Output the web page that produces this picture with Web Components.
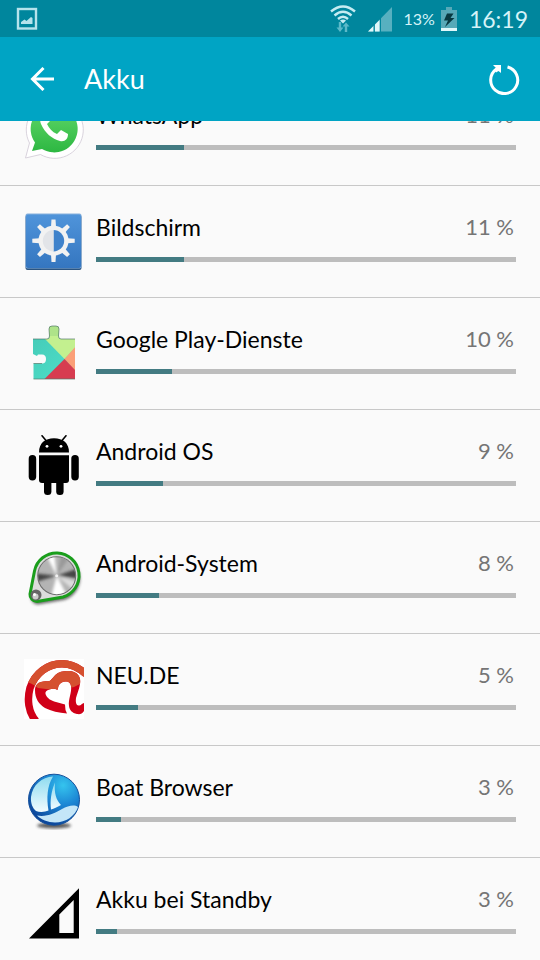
<!DOCTYPE html>
<html lang="de">
<head>
<meta charset="utf-8">
<meta name="viewport" content="width=device-width, initial-scale=1">
<title>Akku</title>
<style>
    body {
        margin: 0;
        background: #fafafa;
        font-family: Lato, "Open Sans", sans-serif;
    }
</style>
</head>
<body>
<battery-screen>
    <status-bar slot="status" time="16:19" charge="13%"></status-bar>
    <app-bar slot="header" heading="Akku"></app-bar>

    <usage-item name="WhatsApp" percent="11" level="21">
        <svg viewBox="0 0 60 60" aria-hidden="true">
            <defs>
                <linearGradient id="wa" x1="0" y1="0" x2="0" y2="1">
                    <stop offset="0" stop-color="#62d86a"/>
                    <stop offset="1" stop-color="#2db742"/>
                </linearGradient>
            </defs>
            <path d="M1.500 59 L5.500 44 A28.500 28.500 0 1 1 16.500 55.500Z" fill="#fff" stroke="#cfc8d4" stroke-width=".8"/>
            <path d="M8 52 L11 43.500 A23.500 23.500 0 1 1 18 50Z" fill="url(#wa)"/>
            <path d="M21 15 C17 16 15 20 17 25 C21 34 28 40 36 42 C41 43 44 40 44 35 L37 31 L33 35 C28 33 25 29 23 25 L26 22 L23 15Z" fill="#fff"/>
        </svg>
    </usage-item>

    <usage-item name="Bildschirm" percent="11" level="21">
        <svg viewBox="0 0 60 60" aria-hidden="true">
            <defs>
                <linearGradient id="bs" x1="0" y1="0" x2="0" y2="1">
                    <stop offset="0" stop-color="#4f94da"/>
                    <stop offset="1" stop-color="#3576c0"/>
                </linearGradient>
                <path id="ray" d="M27 16 L27.500 8.500 H31.500 L32 16Z"/>
            </defs>
            <rect x="1.500" y="4" width="56" height="55" rx="2" fill="#2b5480"/>
            <rect x="1.500" y="2.500" width="56" height="55" rx="2" fill="#86b0dc"/>
            <rect x="2" y="3.500" width="55" height="53.500" rx="2" fill="url(#bs)"/>
            <g fill="#f2f2f2">
                <use href="#ray"/>
                <use href="#ray" transform="rotate(45 29.500 29.700)"/>
                <use href="#ray" transform="rotate(90 29.500 29.700)"/>
                <use href="#ray" transform="rotate(135 29.500 29.700)"/>
                <use href="#ray" transform="rotate(180 29.500 29.700)"/>
                <use href="#ray" transform="rotate(225 29.500 29.700)"/>
                <use href="#ray" transform="rotate(270 29.500 29.700)"/>
                <use href="#ray" transform="rotate(315 29.500 29.700)"/>
                <circle cx="29.500" cy="29.700" r="15"/>
            </g>
            <path d="M29.500 19 A10.700 10.700 0 0 1 29.500 40.400Z" fill="#3f82cb"/>
            <path d="M29.500 19 A10.700 10.700 0 0 0 29.500 40.400Z" fill="#e2e4e8"/>
        </svg>
    </usage-item>

    <usage-item name="Google Play-Dienste" percent="10" level="18">
        <svg viewBox="0 0 60 60" aria-hidden="true">
            <defs>
                <clipPath id="puzzle">
                    <path d="M9 16 H23 Q25.500 16 25.500 13 L25 6 Q25 3 28 3 H32 Q35 3 35 6 L34.500 13 Q34.500 16 37 16 H51 V56 H9.500 V40.500 H18 Q22 40.500 22 36 Q22 31.500 18 31.500 H14 L13 33 L9 31Z"/>
                </clipPath>
                <linearGradient id="teal" x1="0" y1="0" x2="1" y2="1">
                    <stop offset="0" stop-color="#43c6b4"/>
                    <stop offset="1" stop-color="#4fe3cb"/>
                </linearGradient>
            </defs>
            <g clip-path="url(#puzzle)">
                <rect width="60" height="60" fill="url(#teal)"/>
                <path d="M21 16 L24 0 H38 L60 15 L40.500 36Z" fill="#c3f08f"/>
                <path d="M24 0 H37 V13 H24Z" fill="#aee389"/>
                <path d="M40.500 36 L52 23 V49Z" fill="#fb9f77"/>
                <path d="M40.500 36 L52 48 V57 H19.500Z" fill="#d73c50"/>
            </g>
            <path d="M9 16 H23 Q25.500 16 25.500 13 L25 6 Q25 3 28 3 H32 Q35 3 35 6 L34.500 13 Q34.500 16 37 16 H51 M9.500 40.500 H18 M9.500 56 H51" fill="none" stroke="#54776a" stroke-opacity=".7"/>
        </svg>
    </usage-item>

    <usage-item name="Android OS" percent="9" level="16">
        <svg viewBox="0 0 60 60" aria-hidden="true">
            <path d="M15 17.500 C15 8 21 3.300 30 3.300 S45 8 45 17.500Z"/>
            <path d="M18 .8 L22 5.500 M42 .8 L38 5.500" stroke="#000" stroke-width="1.600" stroke-linecap="round"/>
            <path d="M15 20.300 H45 V45 Q45 48 42 48 H18 Q15 48 15 45Z"/>
            <rect x="4.700" y="20" width="7.500" height="25.500" rx="3.700"/>
            <rect x="47.300" y="20" width="7.500" height="25.500" rx="3.700"/>
            <rect x="20" y="40" width="7.400" height="20" rx="3.500"/>
            <rect x="32.200" y="40" width="7.400" height="20" rx="3.500"/>
            <circle cx="23" cy="11.300" r="1.400" fill="#fff"/>
            <circle cx="37" cy="11.300" r="1.400" fill="#fff"/>
        </svg>
    </usage-item>

    <usage-item name="Android-System" percent="8" level="15">
        <svg viewBox="0 0 60 60" aria-hidden="true">
            <defs>
                <filter id="soft" x="-20%" y="-20%" width="140%" height="140%"><feGaussianBlur stdDeviation="1.800"/></filter>
                <clipPath id="dial"><circle cx="32.700" cy="28.700" r="18.500"/></clipPath>
                <path id="belt" d="M6 47 L10.500 24 A22.500 22.500 0 1 1 39 50 L13 54.500 A7 7 0 0 1 6 47Z"/>
            </defs>
            <use href="#belt" x="1" y="3" fill="#444" opacity=".8" filter="url(#soft)"/>
            <use href="#belt" fill="#dcdcdc" stroke="#1a9e1c" stroke-width="3"/>
            <circle cx="32.700" cy="28.700" r="19.500" fill="#6b6b6b"/>
            <g clip-path="url(#dial)">
                <rect x="12" y="8" width="42" height="42" fill="#b4b4b4"/>
                <g filter="url(#soft)">
                    <path d="M32.700 28.700 L20 4 H30Z M32.700 28.700 L26 54 H46Z" fill="#fff"/>
                    <path d="M32.700 28.700 L38 4 H50Z" fill="#999"/>
                    <path d="M32.700 28.700 L8 26 V36Z M32.700 28.700 L58 20 V32Z" fill="#444"/>
                    <path d="M32.700 28.700 L58 36 V50Z" fill="#ddd"/>
                </g>
            </g>
            <circle cx="32.700" cy="28.700" r="1.500" fill="#fff" opacity=".8"/>
            <circle cx="12" cy="48" r="5.500" fill="#666"/>
            <circle cx="11.500" cy="49.500" r="3" fill="#ccc"/>
            <circle cx="10.500" cy="47.500" r="1.500" fill="#fff"/>
        </svg>
    </usage-item>

    <usage-item name="NEU.DE" percent="5" level="10">
        <svg viewBox="0 0 60 60" aria-hidden="true">
            <defs>
                <clipPath id="tile"><rect width="60" height="60"/></clipPath>
                <clipPath id="shine"><path d="M0 0 H60 V23 L50 28 Q40 31 26 30.500 L14 29 Q8 24 0 22Z"/></clipPath>
                <g id="at">
                    <path d="M12 62 C4 53 3 40 6 29 C11 14 24 4.800 38 4.800 C46 4.800 54 8 62 15" fill="none" stroke-width="7.500"/>
                    <path stroke="none" d="M11 31 C11 27 13 24 17 23 C20 22 23 22.500 25.500 22 C28 21 30 16 34 14 C38 12 42 12 45.500 12 C51 12.500 55 15 56 20 C57 26 54 32 52 39 C51.500 43 52 46 54.500 46.500 C57 47 58 44 60 44 V52 C58 55 56 55.500 53 55 C48 54 45.500 51 45 47 C44 40 48 34 47 27 C46.500 24 45 22.500 42 22.500 C38 22.500 36 24 34.500 27 L33.500 31 C31 29.500 28 29.500 25.500 30.500 C22.500 31 21 33 21.500 35 C23 39.500 27 41.500 32 43 L41 45.500 L41.500 51 L43 54.500 C35 54 27 52 21 49 C15 45 11 40 11 31Z"/>
                </g>
            </defs>
            <rect width="60" height="60" fill="#fff"/>
            <g clip-path="url(#tile)">
                <use href="#at" fill="#d00018" stroke="#d00018"/>
                <g clip-path="url(#shine)"><use href="#at" fill="#d5502f" stroke="#d5502f"/></g>
            </g>
        </svg>
    </usage-item>

    <usage-item name="Boat Browser" percent="3" level="6">
        <svg viewBox="0 0 60 60" aria-hidden="true">
            <defs>
                <radialGradient id="globe" cx=".68" cy=".22" r=".85">
                    <stop offset="0" stop-color="#35c4ee"/>
                    <stop offset=".45" stop-color="#1c86d4"/>
                    <stop offset="1" stop-color="#0a3f94"/>
                </radialGradient>
                <linearGradient id="sail" x1="0" y1="0" x2="0" y2="1">
                    <stop offset="0" stop-color="#8fdcf0"/>
                    <stop offset="1" stop-color="#f0fbff"/>
                </linearGradient>
            </defs>
            <ellipse cx="30" cy="54.500" rx="17" ry="3" fill="#333" opacity=".8" filter="url(#soft)"/>
            <circle cx="30" cy="28.700" r="25.500" fill="url(#globe)" stroke="#14509c"/>
            <path d="M29 5.500 C18 6 8.500 14 7 26 C6.500 32 8.500 37 12 40 C16 41.500 21 41 24.500 39.500 C22.500 27 23 15 29 5.500Z" fill="url(#sail)"/>
            <path d="M31 11.500 C27 21 26 30 27 38.500 C30 37.500 33 36 37 34 C32 29 30 22 31 11.500Z" fill="url(#sail)"/>
            <path d="M13 44.500 C22 46.500 31 42 38 38 C44 35 50 33 54 36 C51 45 42 51.500 31 51.500 C24 51.500 17 48.500 13 44.500Z" fill="#c4e6f8"/>
        </svg>
    </usage-item>

    <usage-item name="Akku bei Standby" percent="3" level="5">
        <svg viewBox="0 0 60 60" aria-hidden="true">
            <path fill-rule="evenodd" d="M5 55.500 L55 5.300 V55.500Z M35.300 31.500 V50 H49.700 V17Z"/>
        </svg>
    </usage-item>
</battery-screen>

<script>
class BatteryScreen extends HTMLElement {
    connectedCallback() {
        this.attachShadow({ mode: 'open' });
        this.shadowRoot.innerHTML = `
            <style>
                :host {
                    display: flex;
                    flex-direction: column;
                    height: 100vh;
                }

                main {
                    flex: 1;
                    min-height: 0;
                    overflow-y: auto;
                    scrollbar-width: none;
                }
            </style>
            <slot name="status"></slot>
            <slot name="header"></slot>
            <main><slot></slot></main>
        `;
    }

    scrollList(top) {
        this.shadowRoot.querySelector('main').scrollTop = top;
    }
}

class StatusBar extends HTMLElement {
    connectedCallback() {
        this.attachShadow({ mode: 'open' });
        this.shadowRoot.innerHTML = `
            <style>
                :host {
                    display: flex;
                    align-items: center;
                    justify-content: space-between;
                    height: 37px;
                    padding: 0 12px 0 16px;
                    background: #00869d;
                    color: #d5f3f8;
                }

                svg {
                    display: block;
                }

                .system, .charge {
                    display: flex;
                    align-items: center;
                    gap: 12px;
                }

                .charge {
                    gap: 6px;
                    font-size: 16px;
                }

                .time {
                    font-size: 23px;
                }
            </style>
            <svg width="22" height="24" viewBox="0 0 22 24" aria-hidden="true">
                <rect x="2" y="2" width="18" height="19.500" fill="none" stroke="#b5e3ec" stroke-width="2.400"/>
                <path d="M5 17 V15 L8.500 12.500 L10.500 14 L15 10 L16.500 11 V17Z" fill="#b5e3ec"/>
            </svg>
            <div class="system">
                <svg width="26" height="28" viewBox="0 0 26 28" aria-hidden="true">
                    <g fill="none" stroke="#c5ecf2" stroke-width="2.400">
                        <path d="M1 6.500 Q13 -3.500 25 6.500"/>
                        <path d="M4.500 10.500 Q13 3 21.500 10.500"/>
                        <path d="M8 14 Q13 9.500 18 14"/>
                    </g>
                    <path d="M10 15.500 Q13 13.500 16 15.500 L13 18.500Z" fill="#c5ecf2"/>
                    <path d="M10 17 V24 M16 27 V20" stroke="#5cb9c9" stroke-width="2.400"/>
                    <path d="M6.500 22.500 H13.500 L10 27Z M12.500 21.500 H19.500 L16 17.500Z" fill="#5cb9c9"/>
                </svg>
                <svg width="24" height="26" viewBox="0 0 24 26" aria-hidden="true">
                    <path d="M0 25.500 L24 1 V25.500Z" fill="#57b0c0"/>
                    <path d="M0 25.500 L5.500 20 V25.500Z M7 18.500 L11.500 14 V25.500 H7Z" fill="#e0f7fa"/>
                    <path d="M6.200 16 V26 M12.500 10 V26" stroke="#00869d"/>
                </svg>
                <div class="charge">
                    <span>${this.getAttribute('charge')}</span>
                    <svg width="16" height="24" viewBox="0 0 16 24" aria-hidden="true">
                        <path d="M5 0 H11 V3 H16 V24 H0 V3 H5Z" fill="#57a9b8"/>
                        <path d="M0 21 H16 V24 H0Z" fill="#e0f7fa"/>
                        <path d="M6 6.500 H12.500 L9.500 11 H13.500 L4 20 L7 13.500 H3Z" fill="#083840"/>
                    </svg>
                </div>
                <span class="time">${this.getAttribute('time')}</span>
            </div>
        `;
    }
}

class AppBar extends HTMLElement {
    connectedCallback() {
        this.attachShadow({ mode: 'open' });
        this.shadowRoot.innerHTML = `
            <style>
                :host {
                    display: flex;
                    align-items: center;
                    height: 84px;
                    padding: 0 12px 0 18px;
                    background: #00a4c4;
                    color: #fff;
                }

                h1 {
                    flex: 1;
                    margin: 0 0 0 18px;
                    font-size: 27px;
                    font-weight: 400;
                    line-height: 32px;
                }

                button {
                    display: grid;
                    place-items: center;
                    width: 48px;
                    height: 48px;
                    padding: 0;
                    border: 0;
                    background: none;
                    color: inherit;
                    cursor: pointer;
                }
            </style>
            <button type="button" aria-label="Zurück">
                <svg width="24" height="24" viewBox="0 0 24 24" fill="none" stroke="currentColor" stroke-width="3" aria-hidden="true">
                    <path d="M13.500 1 L2.500 12 L13.500 23 M2.500 12 H24"/>
                </svg>
            </button>
            <h1>${this.getAttribute('heading')}</h1>
            <button type="button" aria-label="Aktualisieren">
                <svg width="32" height="32" viewBox="0 0 32 32" aria-hidden="true">
                    <path d="M19.500 4 A13.500 13.500 0 1 1 8.500 6" fill="none" stroke="currentColor" stroke-width="3"/>
                    <path d="M5 2 H13 V10 L10.500 8 L8 9.500 L6 6.500 L8 5Z" fill="currentColor"/>
                </svg>
            </button>
        `;
    }
}

class UsageItem extends HTMLElement {
    connectedCallback() {
        const percent = this.getAttribute('percent');
        this.attachShadow({ mode: 'open' });
        this.shadowRoot.innerHTML = `
            <style>
                :host {
                    display: flex;
                    gap: 12px;
                    box-sizing: border-box;
                    height: 112px;
                    padding: 25px 24px 0;
                    border-bottom: 1px solid #c8c8c8;
                }

                ::slotted(svg) {
                    flex: none;
                    width: 60px;
                    height: 60px;
                }

                .usage {
                    flex: 1;
                }

                .line {
                    display: flex;
                    justify-content: space-between;
                    height: 46px;
                    padding-right: 2px;
                    line-height: 32px;
                }

                label {
                    color: #000;
                    font-size: 23px;
                }

                .percent {
                    color: #757575;
                    font-size: 22px;
                }

                progress {
                    display: block;
                    width: 100%;
                    height: 5px;
                    border: 0;
                    appearance: none;
                    background: #bdbdbd;
                }

                progress::-webkit-progress-bar {
                    background: #bdbdbd;
                }

                progress::-webkit-progress-value {
                    background: #437b82;
                }

                progress::-moz-progress-bar {
                    background: #437b82;
                }
            </style>
            <slot></slot>
            <div class="usage">
                <div class="line">
                    <label for="level">${this.getAttribute('name')}</label>
                    <span class="percent">${percent} %</span>
                </div>
                <progress id="level" max="100" value="${this.getAttribute('level')}"></progress>
            </div>
        `;
    }
}

customElements.define('status-bar', StatusBar);
customElements.define('app-bar', AppBar);
customElements.define('usage-item', UsageItem);
customElements.define('battery-screen', BatteryScreen);

// start with the top entry partly scrolled under the app bar
document.querySelector('battery-screen').scrollList(47);
</script>
</body>
</html>
